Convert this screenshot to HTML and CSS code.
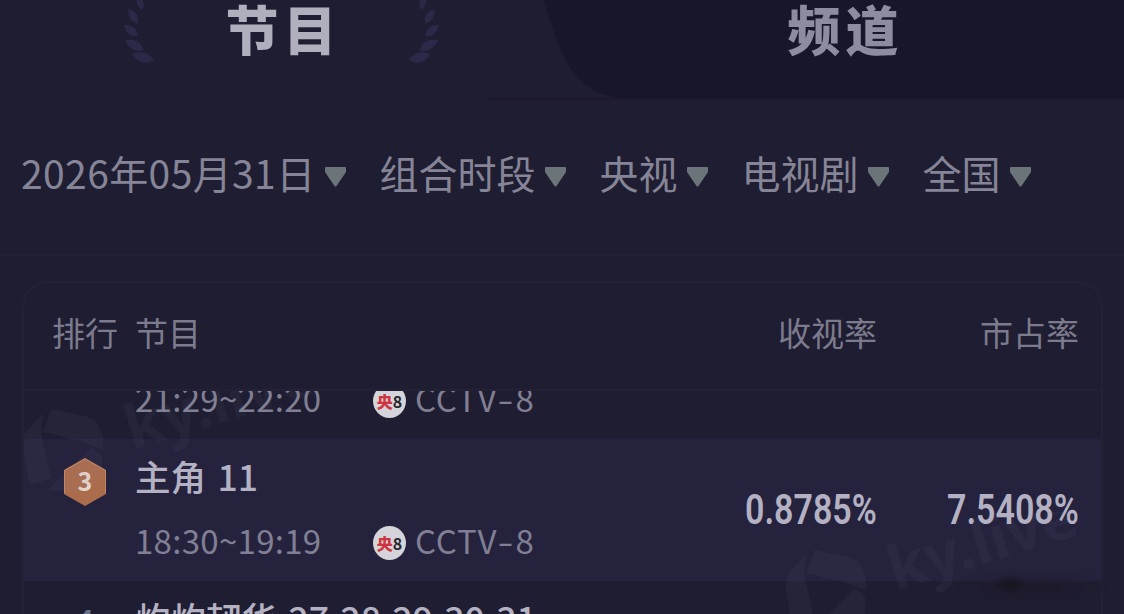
FILE: index.html
```
<!DOCTYPE html>
<html lang="zh-CN">
<head>
    <meta charset="UTF-8">
    <meta name="viewport" content="width=device-width, initial-scale=1.0">
    <title>收视率排行</title>
    <link rel="stylesheet" href="styles.css">
</head>
<body>
    <svg width="0" height="0" class="defs">
        <symbol id="arrow" viewBox="0 0 21 20">
            <path d="M1 0h19q1 0 1 1v4L11.5 19q-1 1-2 0L0 5V1q0-1 1-1z"/>
        </symbol>
        <symbol id="laurel" viewBox="0 0 32 66">
            <path d="M14 -5Q23 2 18 10Q10 4 14 -5Z"/>
            <path d="M4 9Q16 12 14 24Q4 21 4 9Z"/>
            <path d="M0 25Q12 24 14 36Q3 38 0 25Z"/>
            <path d="M1 40Q15 37 20 50Q7 54 1 40Z"/>
            <path d="M8 54Q22 48 30 60Q18 68 8 54Z"/>
        </symbol>
        <symbol id="mark" viewBox="0 0 400 150">
            <path d="M30 38L66 46Q73 48 76 54L81 66V79L62 71L21 61Z"/>
            <path d="M21 42L19 62L29 107L12 113Q8 114 7 110L1 78Q0 68 3 62Z"/>
            <path d="M70 76L80 85V97Q80 108 73 112L52 121L26 119L48 98Z"/>
            <text x="110" y="79" transform="rotate(-17 110 79)">ky.live</text>
        </symbol>
    </svg>

    <div class="tabs">
        <svg class="tabs-bg" viewBox="0 0 1124 102">
            <path class="line" d="M488 97h636v3H488z"/>
            <path d="M543 0C554 30 560 56 574 73Q592 96 622 98H1124V0z"/>
        </svg>
        <div class="tab active">
            <svg class="laurel"><use href="#laurel"/></svg>
            <span>节目</span>
            <svg class="laurel right"><use href="#laurel"/></svg>
        </div>
        <div class="tab"><span>频道</span></div>
    </div>

    <div class="filters">
        <div class="filter date">2026年05月31日<svg><use href="#arrow"/></svg></div>
        <div class="filter">组合时段<svg><use href="#arrow"/></svg></div>
        <div class="filter">央视<svg><use href="#arrow"/></svg></div>
        <div class="filter">电视剧<svg><use href="#arrow"/></svg></div>
        <div class="filter">全国<svg><use href="#arrow"/></svg></div>
    </div>

    <div class="table">
        <div class="thead">
            <div class="rank">排行</div>
            <div class="name">节目</div>
            <div class="rate">收视率</div>
            <div class="share">市占率</div>
        </div>
        <div class="list">
            <div class="row first">
                <div class="rank"></div>
                <div class="name">
                    <div class="title"></div>
                    <div class="info">
                        <span class="time">21:29~22:20</span>
                        <span class="logo"><b>央</b>8</span>
                        <span class="channel">CCTV<em>-</em>8</span>
                    </div>
                </div>
            </div>
            <div class="row light">
                <div class="rank">
                    <svg class="medal" viewBox="0 0 44 50">
                        <path d="M22 1L43 13V37L22 49L1 37V13Z"/>
                        <path class="edge" d="M1.5 36V13.5L22 1.8L42.5 13.5V36"/>
                        <text x="22" y="34">3</text>
                    </svg>
                </div>
                <div class="name">
                    <div class="title">主角 11</div>
                    <div class="info">
                        <span class="time">18:30~19:19</span>
                        <span class="logo"><b>央</b>8</span>
                        <span class="channel">CCTV<em>-</em>8</span>
                    </div>
                </div>
                <div class="rate"><span>0.8785%</span></div>
                <div class="share"><span>7.5408%</span></div>
            </div>
            <div class="row last">
                <div class="rank"><i>4</i></div>
                <div class="name">
                    <div class="title">灼灼韧华 27 28 29 30 31</div>
                </div>
            </div>
            <svg class="mark mark1"><use href="#mark"/></svg>
            <svg class="mark mark2"><use href="#mark"/></svg>
        </div>
    </div>
    <div class="smudge"></div>
</body>
</html>
```

FILE: styles.css
```
*{
    padding: 0;
    margin: 0;
    box-sizing: border-box;
}
body{
    width: 1124px;
    height: 614px;
    overflow: hidden;
    position: relative;
    background-color: #1f1d31;
    color: #858597;
    font-family: "Noto Sans CJK SC", sans-serif;
}
.defs{
    position: absolute;
}

/* 顶部切换 */
.tabs{
    position: relative;
    display: flex;
    height: 102px;
}
.tabs-bg{
    position: absolute;
    top: 0;
    left: 0;
    width: 1124px;
    height: 102px;
    fill: #181629;
}
.tabs-bg .line{
    fill: #1b192b;
}
.tab{
    position: relative;
    width: 562px;
    height: 66px;
    display: flex;
    justify-content: center;
    font-size: 53px;
    line-height: 56px;
    font-weight: 900;
    letter-spacing: 5px;
    color: #8e8d9f;
}
.tab span{
    margin-right: -5px;
}
.tab.active{
    color: #b0afbe;
    gap: 70px;
}
.laurel{
    width: 32px;
    height: 66px;
    flex: none;
    fill: #2b2848;
}
.laurel.right{
    transform: scaleX(-1);
}

/* 筛选条件 */
.filters{
    display: flex;
    gap: 34px;
    height: 154px;
    padding: 42px 0 0 21px;
    border-bottom: 2px solid #232136;
}
.filter{
    display: flex;
    height: 56px;
    line-height: 56px;
    font-size: 39px;
    white-space: nowrap;
}
.filter.date{
    letter-spacing: 0.4px;
}
.filter svg{
    width: 21px;
    height: 20px;
    margin: 23px 0 0 9px;
    fill: #6b7478;
}

/* 排行列表 */
.table{
    width: 1081px;
    height: 333px;
    margin: 25px 0 0 22px;
    border: 2px solid #232136;
    border-bottom: none;
    border-radius: 26px 26px 0 0;
}
.thead, .row{
    display: grid;
    grid-template-columns: 84px 1fr 200px 202px;
    padding: 0 22px 0 28px;
}
.thead{
    height: 108px;
    line-height: 98px;
    font-size: 33px;
    border-bottom: 2px solid #232136;
    color: #7c7b8d;
}
.thead .name{
    margin-left: -1px;
}
.rate, .share{
    text-align: right;
}
.list{
    position: relative;
    height: 223px;
    overflow: hidden;
}
.row{
    height: 142px;
}
.row.first{
    margin-top: -94px;
}
.row.light{
    background-color: #25223e;
}
.title{
    height: 78px;
    line-height: 74px;
    margin-left: -1px;
    font-size: 35.5px;
    font-weight: 500;
    word-spacing: 3.5px;
    white-space: nowrap;
    color: #b3b1c2;
}
.info{
    display: flex;
    align-items: center;
    height: 48px;
    font-size: 33px;
    letter-spacing: 0.3px;
    color: #807f93;
}
.time{
    width: 238px;
    margin-left: -1px;
    padding-bottom: 2px;
}
.logo{
    display: flex;
    align-items: center;
    justify-content: center;
    width: 33px;
    height: 34px;
    margin-top: 4px;
    border-radius: 50%;
    background-color: #d5d4da;
    font-size: 16px;
    font-weight: 700;
    letter-spacing: 0;
    color: #28272c;
}
.logo b{
    color: #cf3540;
}
.channel{
    margin-left: 9px;
    padding-bottom: 2px;
    letter-spacing: 0.8px;
}
.channel em{
    display: inline-block;
    margin: 0 3px;
    font-style: normal;
    transform: scaleX(1.4);
}
.row .rate, .row .share{
    line-height: 142px;
    font-family: Roboto, sans-serif;
    font-size: 42px;
    font-weight: 600;
    color: #b3b1c2;
}
.row .rate span, .row .share span{
    display: inline-block;
    transform: scaleX(0.81);
    transform-origin: right;
}
.medal{
    display: block;
    width: 44px;
    height: 50px;
    margin: 18px 0 0 11px;
    fill: #ab6c4c;
}
.medal .edge{
    fill: none;
    stroke: #c08767;
}
.medal text{
    fill: #e4d4cc;
    font-size: 25px;
    font-weight: 700;
    text-anchor: middle;
}
.rank i{
    display: block;
    padding: 22px 0 0 23px;
    font-family: Roboto, sans-serif;
    font-size: 30px;
    font-weight: 700;
    color: #66718b;
}

/* 水印 */
.mark{
    position: absolute;
    width: 400px;
    height: 150px;
    fill: #9391a8;
    opacity: 0.06;
    font: 700 61px "Noto Sans", sans-serif;
}
.mark1{
    left: -2px;
    top: -20px;
}
.mark2{
    left: 761px;
    top: 121px;
}
.smudge{
    position: absolute;
    left: 940px;
    top: 568px;
    width: 184px;
    height: 40px;
    background: radial-gradient(ellipse 16px 10px at 70px 16px, #17151f 10%, transparent),
        radial-gradient(ellipse at center, rgba(25, 23, 37, 0.6), transparent 70%);
}
```
